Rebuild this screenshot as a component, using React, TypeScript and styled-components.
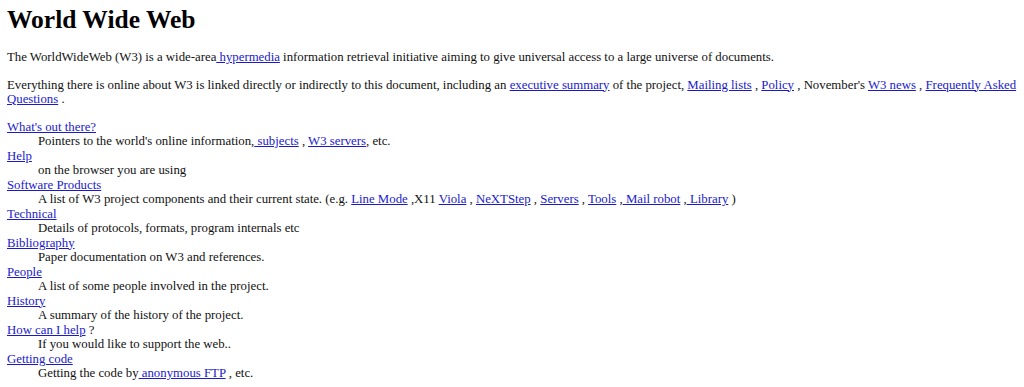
import React from "react";
import styled, { createGlobalStyle } from "styled-components";

const Global = createGlobalStyle`
  html, body { margin: 0; padding: 0; background: #ffffff; }
  body {
    font-family: "Liberation Serif", "Times New Roman", serif;
    font-size: 12.8px;
    line-height: 14.5px;
    color: #111111;
  }
`;

const Page = styled.div`
  padding: 0 7px;
`;

const Title = styled.h1`
  font-size: 25.5px;
  font-weight: bold;
  line-height: 29px;
  margin: 5px 0 16px;
  color: #000;
`;

const Para = styled.p`
  margin: 0 0 13px;
`;

const Link = styled.a`
  color: #1a1acc;
  text-decoration: underline;
`;

const List = styled.dl`
  margin: 13px 0 0;
`;

const Term = styled.dt`
  margin: 0;
`;

const Desc = styled.dd`
  margin: 0 0 0 31px;
`;

export default function App() {
  return (
    <>
      <Global />
      <Page>
        <Title>World Wide Web</Title>
        <Para>
          The WorldWideWeb (W3) is a wide-area<Link href="#"> hypermedia</Link> information retrieval
          initiative aiming to give universal access to a large universe of documents.
        </Para>
        <Para>
          Everything there is online about W3 is linked directly or indirectly to this document,
          including an <Link href="#">executive summary</Link> of the project,{" "}
          <Link href="#">Mailing lists</Link> , <Link href="#">Policy</Link> , November's{" "}
          <Link href="#">W3 news</Link> , <Link href="#">Frequently Asked Questions</Link> .
        </Para>
        <List>
          <Term><Link href="#">What's out there?</Link></Term>
          <Desc>
            Pointers to the world's online information,<Link href="#"> subjects</Link> ,{" "}
            <Link href="#">W3 servers</Link>, etc.
          </Desc>
          <Term><Link href="#">Help</Link></Term>
          <Desc>on the browser you are using</Desc>
          <Term><Link href="#">Software Products</Link></Term>
          <Desc>
            A list of W3 project components and their current state. (e.g.{" "}
            <Link href="#">Line Mode</Link> ,X11 <Link href="#">Viola</Link> ,{" "}
            <Link href="#">NeXTStep</Link> , <Link href="#">Servers</Link> ,{" "}
            <Link href="#">Tools</Link> ,<Link href="#"> Mail robot</Link> ,
            <Link href="#"> Library</Link> )
          </Desc>
          <Term><Link href="#">Technical</Link></Term>
          <Desc>Details of protocols, formats, program internals etc</Desc>
          <Term><Link href="#">Bibliography</Link></Term>
          <Desc>Paper documentation on W3 and references.</Desc>
          <Term><Link href="#">People</Link></Term>
          <Desc>A list of some people involved in the project.</Desc>
          <Term><Link href="#">History</Link></Term>
          <Desc>A summary of the history of the project.</Desc>
          <Term><Link href="#">How can I help</Link> ?</Term>
          <Desc>If you would like to support the web..</Desc>
          <Term><Link href="#">Getting code</Link></Term>
          <Desc>
            Getting the code by<Link href="#"> anonymous FTP</Link> , etc.
          </Desc>
        </List>
      </Page>
    </>
  );
}
